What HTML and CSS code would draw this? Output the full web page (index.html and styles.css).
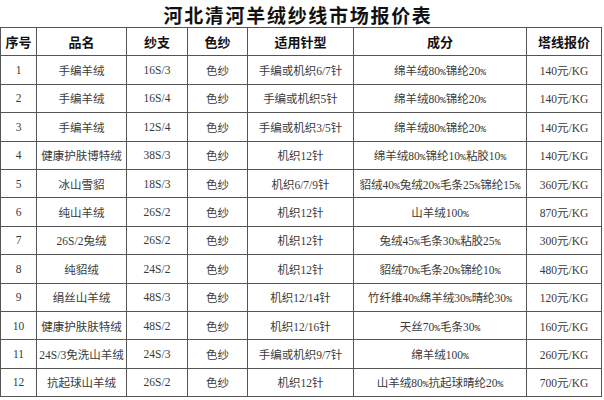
FILE: index.html
```html
<!DOCTYPE html>
<html lang="zh">
<head>
<meta charset="utf-8">
<link rel="stylesheet" href="styles.css">
</head>
<body>
<h1 class="title">河北清河羊绒纱线市场报价表</h1>
<table class="price">
<colgroup>
<col class="c1"><col class="c2"><col class="c3"><col class="c4"><col class="c5"><col class="c6"><col class="c7">
</colgroup>
<thead>
<tr><th>序号</th><th>品名</th><th>纱支</th><th>色纱</th><th>适用针型</th><th>成分</th><th>塔线报价</th></tr>
</thead>
<tbody>
<tr><td>1</td><td>手编羊绒</td><td>16S/3</td><td>色纱</td><td>手编或机织6/7针</td><td>绵羊绒80<span class="p">%</span>锦纶20<span class="p">%</span></td><td>140元/KG</td></tr>
<tr><td>2</td><td>手编羊绒</td><td>16S/4</td><td>色纱</td><td>手编或机织5针</td><td>绵羊绒80<span class="p">%</span>锦纶20<span class="p">%</span></td><td>140元/KG</td></tr>
<tr><td>3</td><td>手编羊绒</td><td>12S/4</td><td>色纱</td><td>手编或机织3/5针</td><td>绵羊绒80<span class="p">%</span>锦纶20<span class="p">%</span></td><td>140元/KG</td></tr>
<tr><td>4</td><td>健康护肤博特绒</td><td>38S/3</td><td>色纱</td><td>机织12针</td><td>绵羊绒80<span class="p">%</span>锦纶10<span class="p">%</span>粘胶10<span class="p">%</span></td><td>140元/KG</td></tr>
<tr><td>5</td><td>冰山雪貂</td><td>18S/3</td><td>色纱</td><td>机织6/7/9针</td><td>貂绒40<span class="p">%</span>兔绒20<span class="p">%</span>毛条25<span class="p">%</span>锦纶15<span class="p">%</span></td><td>360元/KG</td></tr>
<tr><td>6</td><td>纯山羊绒</td><td>26S/2</td><td>色纱</td><td>机织12针</td><td>山羊绒100<span class="p">%</span></td><td>870元/KG</td></tr>
<tr><td>7</td><td>26S/2兔绒</td><td>26S/2</td><td>色纱</td><td>机织12针</td><td>兔绒45<span class="p">%</span>毛条30<span class="p">%</span>粘胶25<span class="p">%</span></td><td>300元/KG</td></tr>
<tr><td>8</td><td>纯貂绒</td><td>24S/2</td><td>色纱</td><td>机织12针</td><td>貂绒70<span class="p">%</span>毛条20<span class="p">%</span>锦纶10<span class="p">%</span></td><td>480元/KG</td></tr>
<tr><td>9</td><td>绢丝山羊绒</td><td>48S/3</td><td>色纱</td><td>机织12/14针</td><td>竹纤维40<span class="p">%</span>绵羊绒30<span class="p">%</span>晴纶30<span class="p">%</span></td><td>120元/KG</td></tr>
<tr><td>10</td><td>健康护肤肤特绒</td><td>48S/2</td><td>色纱</td><td>机织12/16针</td><td>天丝70<span class="p">%</span>毛条30<span class="p">%</span></td><td>160元/KG</td></tr>
<tr><td>11</td><td>24S/3免洗山羊绒</td><td>24S/3</td><td>色纱</td><td>手编或机织9/7针</td><td>绵羊绒100<span class="p">%</span></td><td>260元/KG</td></tr>
<tr><td>12</td><td>抗起球山羊绒</td><td>26S/2</td><td>色纱</td><td>机织12针</td><td>山羊绒80<span class="p">%</span>抗起球晴纶20<span class="p">%</span></td><td>700元/KG</td></tr>
</tbody>
</table>
</body>
</html>
```
FILE: styles.css
```css
html, body {
  margin: 0;
  padding: 0;
  background: #ffffff;
}
body {
  width: 604px;
  font-family: "Liberation Serif", "Noto Sans CJK SC", serif;
  color: #333333;
}
.title {
  margin: 0;
  height: 27px;
  line-height: 29px;
  font-family: "Noto Sans CJK SC", sans-serif;
  font-size: 19px;
  font-weight: 700;
  letter-spacing: 1.7px;
  color: #111111;
  text-align: center;
  padding-right: 8px;
}
.price {
  border-collapse: collapse;
  table-layout: fixed;
  width: 601px;
  margin: 0;
  font-size: 11.5px;
}
.price .c1 { width: 36px; }
.price .c2 { width: 90px; }
.price .c3 { width: 61px; }
.price .c4 { width: 60px; }
.price .c5 { width: 106px; }
.price .c6 { width: 173px; }
.price .c7 { width: 75px; }
.price th,
.price td {
  border: 1px solid #555555;
  height: 27.4px;
  padding: 0;
  text-align: center;
  vertical-align: middle;
  white-space: nowrap;
  overflow: hidden;
}
.price th {
  font-family: "Noto Sans CJK SC", sans-serif;
  font-weight: 700;
  font-size: 13px;
  color: #111111;
}
.price td {
  font-weight: 400;
  color: #3a3a3a;
}
.price .p {
  font-family: "Liberation Mono", monospace;
  font-size: 9.6px;
}
```
